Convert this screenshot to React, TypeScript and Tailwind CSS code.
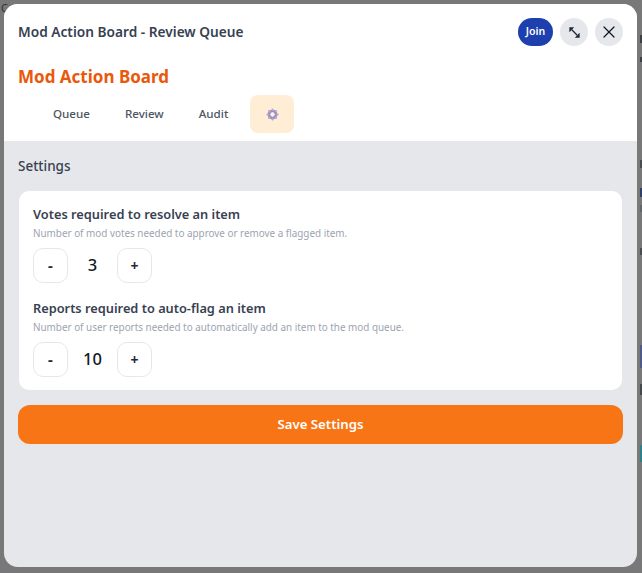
import { X } from "lucide-react";

function GearIcon() {
  return (
    <svg width="13" height="13" viewBox="0 0 24 24" fill="none">
      <circle cx="12" cy="12" r="6.5" stroke="#9a8cbc" strokeWidth="5" />
      <g stroke="#b3a7cf" strokeWidth="3.4" strokeLinecap="round">
        <path d="M12 2.5v2M12 19.5v2M2.5 12h2M19.5 12h2M5.3 5.3l1.5 1.5M17.2 17.2l1.5 1.5M5.3 18.7l1.5-1.5M17.2 6.8l1.5-1.5" />
      </g>
      <circle cx="12" cy="12" r="3.5" fill="#f6f1f6" />
    </svg>
  );
}

function ExpandIcon() {
  return (
    <svg width="13" height="13" viewBox="0 0 24 24" fill="none">
      <path d="M7 7l10 10" stroke="#1f2937" strokeWidth="2.4" />
      <path d="M2.5 2.5h9l-9 9z M21.5 21.5h-9l9-9z" fill="#1f2937" />
    </svg>
  );
}

function Stepper({ title, hint, value }: { title: string; hint: string; value: number }) {
  return (
    <div>
      <h3 className="text-[12.8px] leading-[18px] font-semibold text-[#374151]">{title}</h3>
      <p className="mt-[2px] text-[9.9px] leading-[16px] text-[#9ca3af]">{hint}</p>
      <div className="mt-[6.5px] flex items-center">
        <button className="flex h-[35px] w-[35px] items-center justify-center rounded-[10px] border border-[#e5e7eb] bg-white text-[15px] font-bold text-[#1f2937]">
          -
        </button>
        <span className="w-[49px] text-center text-[16.5px] font-medium text-[#111827]">{value}</span>
        <button className="flex h-[35px] w-[35px] items-center justify-center rounded-[10px] border border-[#e5e7eb] bg-white text-[14px] font-bold text-[#1f2937]">
          +
        </button>
      </div>
    </div>
  );
}

// bits of the page behind the overlay that show past the modal's right edge
const behind = [
  { top: "top-[35px]", h: "h-[8px]", bg: "bg-[#3c4043]" },
  { top: "top-[57px]", h: "h-[5px]", bg: "bg-[#3c4043]" },
  { top: "top-[160px]", h: "h-[8px]", bg: "bg-[#4a4d50]" },
  { top: "top-[188px]", h: "h-[9px]", bg: "bg-[#2f3f66]" },
  { top: "top-[205px]", h: "h-[7px]", bg: "bg-[#63676a]" },
  { top: "top-[248px]", h: "h-[7px]", bg: "bg-[#4a4d50]" },
  { top: "top-[345px]", h: "h-[23px]", bg: "bg-[#4f5a86]" },
  { top: "top-[384px]", h: "h-[11px]", bg: "bg-[#46494b]" },
  { top: "top-[445px]", h: "h-[17px]", bg: "bg-[#2f8088]" },
];

export default function App() {
  const tabs = ["Queue", "Review", "Audit"];
  return (
    <div className="relative h-[573px] w-[642px] overflow-hidden bg-[#787878] pb-[6px] pl-[4px] pr-[5px] pt-[4px] font-['Noto_Sans',sans-serif]">
      {behind.map((b) => (
        <div key={b.top} className={`absolute right-0 w-[2px] ${b.top} ${b.h} ${b.bg}`} />
      ))}
      <span className="absolute left-[1px] top-0 text-[11px] text-[#333]">C</span>
      <div className="relative flex h-full flex-col overflow-hidden rounded-[14px] bg-[#e5e7eb]">
        <div className="bg-white px-[14px] pb-[8px]">
          <div className="flex h-[56px] items-center justify-between">
            <h2 className="pt-[1px] text-[13.7px] font-semibold text-[#374151]">Mod Action Board - Review Queue</h2>
            <div className="flex items-center gap-[7px]">
              <button className="h-[28px] w-[35px] rounded-full bg-[#1e40af] text-[10.5px] font-semibold text-white">Join</button>
              <button className="flex h-[28px] w-[28px] items-center justify-center rounded-full bg-[#e5e7eb]">
                <ExpandIcon />
              </button>
              <button className="flex h-[28px] w-[28px] items-center justify-center rounded-full bg-[#e5e7eb] text-[#111827]">
                <X size={20} strokeWidth={1.5} />
              </button>
            </div>
          </div>
          <h1 className="mt-[5px] text-[17px] leading-[24px] font-bold text-[#ea580c]">Mod Action Board</h1>
          <div className="mt-[6px] flex gap-[7px] pl-[21px]">
            {tabs.map((tab) => (
              <button key={tab} className="h-[38px] px-[14px] text-[11.6px] font-medium text-[#4b5563]">
                {tab}
              </button>
            ))}
            <button className="ml-[1px] flex h-[38px] w-[44px] items-center justify-center rounded-[8px] bg-[#ffedd5]">
              <GearIcon />
            </button>
          </div>
        </div>
        <div className="flex flex-1 flex-col px-[14px] pt-[15px]">
          <h2 className="text-[13.5px] leading-[20px] font-medium text-[#374151]">Settings</h2>
          <div className="mx-[1px] mt-[15px] flex flex-col gap-[16.5px] rounded-[10px] bg-white px-[14px] pb-[13.5px] pt-[14px]">
            <Stepper title="Votes required to resolve an item" hint="Number of mod votes needed to approve or remove a flagged item." value={3} />
            <Stepper title="Reports required to auto-flag an item" hint="Number of user reports needed to automatically add an item to the mod queue." value={10} />
          </div>
          <button className="mt-[15px] h-[39px] rounded-[12px] bg-[#f77514] text-[13.2px] font-semibold text-white">Save Settings</button>
        </div>
      </div>
    </div>
  );
}
